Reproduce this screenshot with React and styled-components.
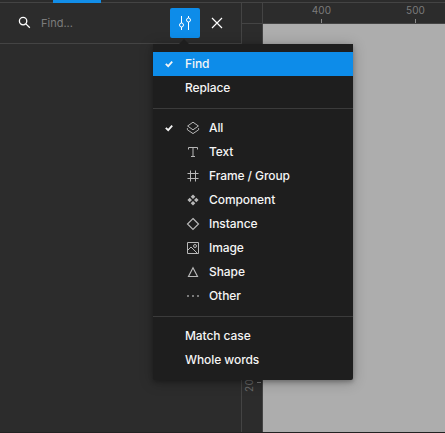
import React from "react";
import styled, { createGlobalStyle } from "styled-components";

const GlobalStyle = createGlobalStyle`
  * { box-sizing: border-box; }
  body { margin: 0; background: #2c2c2c; overflow: hidden; }
`;

const Window = styled.div`
  position: relative;
  display: grid;
  grid-template-rows: 3px 1fr;
  width: 445px;
  height: 433px;
  overflow: hidden;
  background: #2c2c2c;
  border-bottom: 1px solid #222;
  font-family: Inter, "Liberation Sans", sans-serif;
`;

const TopBar = styled.div`
  border-bottom: 1px solid #444;
`;

const ActiveTab = styled.div`
  width: 48px;
  height: 3px;
  margin-left: 53px;
  background: #128ee9;
`;

const Workspace = styled.div`
  display: grid;
  grid-template-columns: 242px 21px 1fr;
  grid-template-rows: 21px 1fr;
`;

const Sidebar = styled.aside`
  grid-row: 1 / 3;
  border-right: 1px solid #444;
`;

const SearchBar = styled.div`
  display: flex;
  align-items: center;
  height: 41px;
  padding-left: 17px;
  border-bottom: 1px solid #444;
`;

const SearchInput = styled.input`
  width: 129px;
  margin-left: 8px;
  padding: 0;
  border: 0;
  outline: 0;
  background: transparent;
  color: #fff;
  font: 400 11px/16px Inter, sans-serif;
  letter-spacing: 0;
  &::placeholder { color: #7c7c7c; opacity: 1; }
`;

const IconButton = styled.button`
  display: grid;
  place-items: center;
  width: ${(p) => p.$width}px;
  height: 30px;
  padding: 0;
  border: 0;
  border-radius: 2px;
  color: #fff;
  background: ${(p) => (p.$active ? "#0d8ce9" : "transparent")};
`;

const RulerCorner = styled.div`
  border-right: 1px solid #444;
  border-bottom: 1px solid #444;
`;

const HorizontalRuler = styled.div`
  display: flex;
  padding-left: 11px;
  border-bottom: 1px solid #444;
`;

const Mark = styled.div`
  display: flex;
  flex-direction: column;
  align-items: center;
  justify-content: space-between;
  flex: 0 0 94px;
  padding-top: 1px;
  color: #7b7b7b;
  font-size: 10px;
  line-height: 13px;
  letter-spacing: 0.1px;
  text-indent: 1px;
  &::after {
    content: "";
    width: 1px;
    height: 4px;
    background: #8a8a8a;
  }
`;

const VerticalRuler = styled.div`
  display: flex;
  align-items: flex-start;
  justify-content: space-between;
  padding: 346px 1px 0 1px;
  border-right: 1px solid #444;
`;

const VerticalLabel = styled.span`
  width: 13px;
  height: 24px;
  writing-mode: vertical-rl;
  transform: rotate(180deg);
  text-align: center;
  color: #6a6a6a;
  font-size: 10px;
  line-height: 13px;
  letter-spacing: 0.4px;
`;

const VerticalTick = styled.span`
  width: 4px;
  height: 1px;
  margin-top: 12px;
  background: #7b7b7b;
`;

const Canvas = styled.div`
  background: #adadad;
`;

const Menu = styled.div`
  position: absolute;
  top: 44px;
  left: 153px;
  width: 200px;
  height: 336px;
  padding: 8px 0;
  border-radius: 0 0 2px 2px;
  background: #1e1e1e;
  box-shadow: 0 2px 14px rgba(0, 0, 0, 0.25), 0 2px 4px rgba(0, 0, 0, 0.25);
  &::before {
    content: "";
    position: absolute;
    top: -5px;
    left: 26px;
    border: 5px solid transparent;
    border-top: 0;
    border-bottom-color: #1e1e1e;
  }
`;

const MenuRow = styled.div`
  display: flex;
  align-items: center;
  height: 24px;
  color: #f5f5f5;
  background: ${(p) => (p.$selected ? "#0d8ce9" : "transparent")};
  font-size: 12px;
  font-weight: 500;
  line-height: 24px;
  letter-spacing: -0.08px;
  white-space: nowrap;
`;

const CheckSlot = styled.span`
  display: flex;
  width: 32px;
  padding-left: 12px;
`;

const IconSlot = styled.span`
  display: flex;
  width: 24px;
  color: #b8b8b8;
`;

const Divider = styled.div`
  height: 1px;
  margin: 8px 0 7px;
  background: #3b3b3b;
`;

const Drawing = styled.svg`
  display: block;
  flex: none;
  fill: none;
  stroke: currentColor;
  stroke-width: ${(p) => p.$weight || 1};
`;

function Check() {
  return (
    <Drawing width="9" height="8" viewBox="0 0 9 8" $weight={1.8}>
      <path d="M.8 3.8 3.2 6.2 7.2 1.7" />
    </Drawing>
  );
}

const drawings = {
  layers: (
    <>
      <path d="M8 2.2 13.4 6 8 9.8 2.6 6Z" />
      <path d="M2.4 8.2v1.6L8 13.6l5.6-3.8V8.2" />
    </>
  ),
  text: <path d="M3.5 5.5v-2h9v2M8 3.5v9M6 12.5h4" />,
  frame: <path d="M5.5 2.5v11M10.5 2.5v11M2.5 5.5h11M2.5 10.5h11" />,
  component: (
    <path
      fill="currentColor"
      stroke="none"
      d="m8 2.4 2.3 2.3L8 7 5.7 4.7ZM4.7 5.7 7 8l-2.3 2.3L2.4 8Zm6.6 0L13.6 8l-2.3 2.3L9 8ZM8 9l2.3 2.3L8 13.6l-2.3-2.3Z"
    />
  ),
  instance: <path strokeWidth="1.2" d="m8 2.5 5.5 5.5L8 13.5 2.5 8Z" />,
  image: (
    <>
      <path d="M2.5 2.5h11v11h-11ZM2.5 10.5 6 7l6 6" />
      <circle cx="10" cy="6" r="1.5" />
    </>
  ),
  shape: <path strokeWidth="1.15" d="M8 3.7 12.5 12.5H3.5Z" />,
  other: (
    <path
      fill="currentColor"
      stroke="none"
      d="M2.2 7.2h1.6v1.6H2.2Zm5 0h1.6v1.6H7.2Zm5 0h1.6v1.6h-1.6Z"
    />
  ),
};

const filters = [
  ["layers", "All"],
  ["text", "Text"],
  ["frame", "Frame / Group"],
  ["component", "Component"],
  ["instance", "Instance"],
  ["image", "Image"],
  ["shape", "Shape"],
  ["other", "Other"],
];

function Item({ label, icon, checked, selected }) {
  return (
    <MenuRow $selected={selected}>
      <CheckSlot>{checked && <Check />}</CheckSlot>
      {icon && (
        <IconSlot>
          <Drawing width="16" height="16" viewBox="0 0 16 16">
            {drawings[icon]}
          </Drawing>
        </IconSlot>
      )}
      <span>{label}</span>
    </MenuRow>
  );
}

export default function App() {
  return (
    <>
      <GlobalStyle />
      <Window>
        <TopBar>
          <ActiveTab />
        </TopBar>
        <Workspace>
          <Sidebar>
            <SearchBar>
              <Drawing width="16" height="16" viewBox="0 0 16 16" $weight={1.3} color="#fff">
                <circle cx="6.1" cy="6.1" r="3.7" />
                <path d="m8.9 8.9 3.9 3.9" />
              </Drawing>
              <SearchInput placeholder="Find..." />
              <IconButton $active $width={30} aria-label="Search settings">
                <Drawing width="14" height="16" viewBox="0 0 14 16">
                  <path d="M3.5 1v7M3.5 12v3M10.5 1v2M10.5 7v8" />
                  <circle cx="3.5" cy="10" r="2" />
                  <circle cx="10.5" cy="5" r="2" />
                </Drawing>
              </IconButton>
              <IconButton $width={34} aria-label="Close">
                <Drawing width="12" height="12" viewBox="0 0 12 12" $weight={1.2}>
                  <path d="m1 1 10 10M11 1 1 11" />
                </Drawing>
              </IconButton>
            </SearchBar>
          </Sidebar>
          <RulerCorner />
          <HorizontalRuler>
            <Mark>400</Mark>
            <Mark>500</Mark>
          </HorizontalRuler>
          <VerticalRuler>
            <VerticalLabel>200</VerticalLabel>
            <VerticalTick />
          </VerticalRuler>
          <Canvas />
        </Workspace>
        <Menu>
          <Item label="Find" checked selected />
          <Item label="Replace" />
          <Divider />
          {filters.map(([icon, label]) => (
            <Item key={label} icon={icon} label={label} checked={label === "All"} />
          ))}
          <Divider />
          <Item label="Match case" />
          <Item label="Whole words" />
        </Menu>
      </Window>
    </>
  );
}
